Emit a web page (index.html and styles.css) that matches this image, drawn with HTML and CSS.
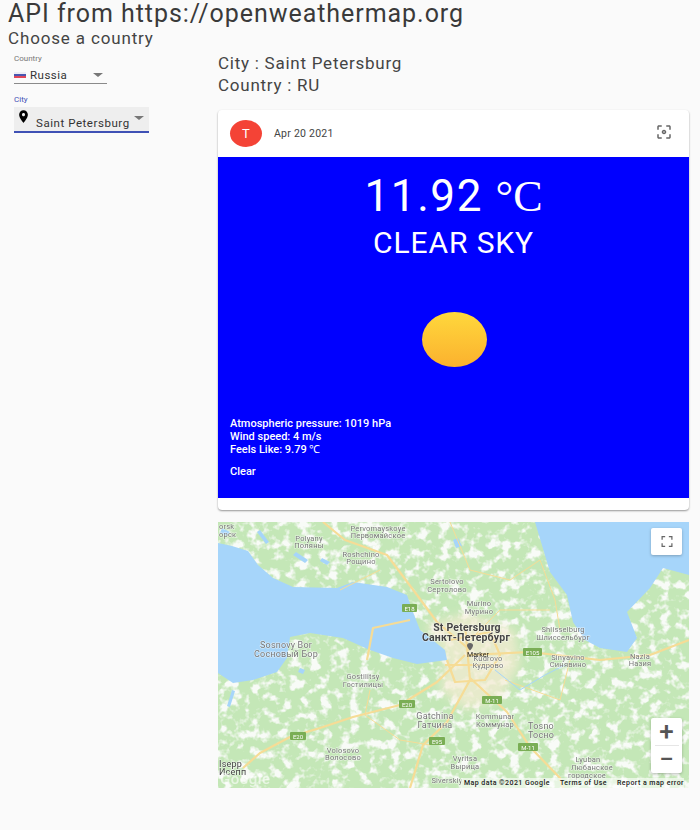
FILE: index.html
```html
<!DOCTYPE html>
<html lang="en">
<head>
    <meta charset="UTF-8">
    <title>Weather</title>
    <link rel="stylesheet" href="styles.css">
</head>
<body>
    <h1 class="title">API from https://openweathermap.org</h1>
    <h2 class="subtitle">Choose a country</h2>
    <div class="layout">
        <aside class="sidebar">
            <div class="field">
                <label class="field-label">Country</label>
                <div class="select">
                    <span class="flag"></span>
                    <span class="select-value">Russia</span>
                    <span class="arrow"></span>
                </div>
            </div>
            <div class="field field-city">
                <label class="field-label field-label-active">City</label>
                <div class="select select-filled">
                    <svg class="pin" viewBox="0 0 24 24"><path d="M12 2C8.13 2 5 5.13 5 9c0 5.25 7 13 7 13s7-7.75 7-13c0-3.87-3.13-7-7-7zm0 9.5c-1.38 0-2.5-1.12-2.5-2.5s1.12-2.5 2.5-2.5 2.5 1.12 2.5 2.5-1.12 2.5-2.5 2.5z"/></svg>
                    <span class="select-value">Saint Petersburg</span>
                    <span class="arrow"></span>
                </div>
            </div>
        </aside>
        <main class="content">
            <p class="place">City : Saint Petersburg</p>
            <p class="place">Country : RU</p>
            <div class="card">
                <div class="card-header">
                    <span class="avatar">T</span>
                    <span class="date">Apr 20 2021</span>
                    <svg class="focus-icon" viewBox="0 0 24 24"><path d="M5 15H3v4c0 1.1.9 2 2 2h4v-2H5v-4zM5 5h4V3H5c-1.1 0-2 .9-2 2v4h2V5zm14-2h-4v2h4v4h2V5c0-1.1-.9-2-2-2zm0 16h-4v2h4c1.1 0 2-.9 2-2v-4h-2v4zM12 9c-1.66 0-3 1.34-3 3s1.34 3 3 3 3-1.34 3-3-1.34-3-3-3zm0 4c-.55 0-1-.45-1-1s.45-1 1-1 1 .45 1 1-.45 1-1 1z"/></svg>
                </div>
                <div class="weather">
                    <div class="temp">11.92 <span class="temp-unit">°C</span></div>
                    <div class="sky">CLEAR SKY</div>
                    <div class="sun"></div>
                    <div class="facts">
                        <p>Atmospheric pressure: 1019 hPa</p>
                        <p>Wind speed: 4 m/s</p>
                        <p>Feels Like: 9.79 ℃</p>
                        <p class="facts-main">Clear</p>
                    </div>
                </div>
            </div>
            <div class="map">
                <svg class="map-art" viewBox="218 522 472 267">
                    <defs>
                        <filter id="patches" x="0" y="0" width="100%" height="100%">
                            <feTurbulence type="fractalNoise" baseFrequency="0.1" numOctaves="3" seed="11"/>
                            <feColorMatrix values="0 0 0 0 0.94  0 0 0 0 0.96  0 0 0 0 0.93  5 0 0 0 -2.45"/>
                            <feGaussianBlur stdDeviation="0.7"/>
                        </filter>
                        <filter id="soft"><feGaussianBlur stdDeviation="0.5"/></filter>
                        <filter id="fade"><feGaussianBlur stdDeviation="5"/></filter>
                    </defs>
                    <rect x="218" y="522" width="472" height="267" fill="#c4e7b7"/>
                    <rect x="218" y="522" width="472" height="267" filter="url(#patches)"/>
                    <path class="city-area" filter="url(#fade)" d="M425 625 L470 612 L515 630 L520 665 L500 700 L465 710 L440 690 L445 655 Z"/>
                    <g filter="url(#soft)">
                        <g class="water">
                            <path d="M218 543 L232 546 L248 551 L258 565 L273 578 L293 587 L337 588 L353 582 L387 587 L407 595 L413 612 L420 630 L445 650 L447 660 L417 664 L393 658 L370 650 L343 638 L310 633 L290 637 L287 658 L277 672 L253 680 L233 683 L218 673 Z"/>
                            <path d="M535 522 L550 572 L567 595 L573 622 L585 640 L600 648 L627 652 L637 638 L627 612 L650 588 L663 568 L689 575 L689 522 Z"/>
                            <path d="M260 530 l9 12 -3 2 -9 -12 Z M296 552 l12 8 -3 3 -12 -8 Z M322 558 l8 4 -3 3 -7 -4 Z M458 538 l4 8 -6 2 -3 -8 Z M222 528 l8 4 -3 4 -7 -3 Z"/>
                            <path d="M300 668 l5 2 -2 4 -5 -2 Z M232 690 l3 1 -5 16 -3 -1 Z"/>
                        </g>
                        <g class="roads">
                            <path d="M243 768 L260 753 L290 737 L320 728 L353 717 L400 705 L437 682 L465 655"/>
                            <path d="M323 522 L345 540 L387 555 L417 595 L437 622 L470 650"/>
                            <path d="M367 660 L373 628 L410 620"/>
                            <path d="M470 678 L507 712 L530 747 L560 778 L563 788"/>
                            <path d="M470 655 L530 652 L600 660 L650 655 L689 640"/>
                            <path d="M410 788 L423 745 L447 722 L470 680"/>
                            <path d="M450 640 L490 632 L500 655 L485 680 L455 682 L447 660 M465 625 L470 680 M445 665 L500 665"/>
                            <path class="road-thin" d="M450 522 L470 570 L510 580 L540 560 L555 600 L560 630 M470 640 L500 610 L550 610 M505 680 L560 700 L570 660 M370 690 L365 715 L400 740 L430 745 M340 590 L380 570"/>
                            <path class="road-blue" d="M495 670 L520 690 L545 675 L565 665"/>
                        </g>
                        <g class="shields">
                            <rect x="402" y="604" width="15" height="8"/>
                            <rect x="523" y="648" width="19" height="8"/>
                            <rect x="399" y="700" width="16" height="8"/>
                            <rect x="290" y="732" width="16" height="8"/>
                            <rect x="429" y="737" width="16" height="8"/>
                            <rect x="482" y="696" width="20" height="8"/>
                            <rect x="518" y="743" width="20" height="8"/>
                        </g>
                        <g class="shield-text">
                            <text x="409.500" y="610.500">E18</text>
                            <text x="532.500" y="654.500">E105</text>
                            <text x="407" y="706.500">E20</text>
                            <text x="298" y="738.500">E20</text>
                            <text x="437" y="743.500">E95</text>
                            <text x="492" y="702.500">M-11</text>
                            <text x="528" y="749.500">M-11</text>
                        </g>
                        <g class="labels">
                            <text x="219" y="529" class="label-start">orsk</text><text x="219" y="537" class="label-start">орск</text>
                            <text x="309" y="541">Polyany</text><text x="309" y="548">Поляны</text>
                            <text x="378" y="531">Pervomayskoye</text><text x="378" y="538">Первомайское</text>
                            <text x="361" y="557">Roshchino</text><text x="361" y="564">Рощино</text>
                            <text x="447" y="584">Sertolovo</text><text x="447" y="592">Сертолово</text>
                            <text x="479" y="606">Murino</text><text x="479" y="614">Мурино</text>
                            <text x="563" y="632">Shlisselburg</text><text x="563" y="640">Шлиссельбург</text>
                            <text x="488" y="661">Kudrovo</text><text x="488" y="668">Кудрово</text>
                            <text x="568" y="660">Sinyavino</text><text x="568" y="667">Синявино</text>
                            <text x="640" y="659">Nazia</text><text x="640" y="666">Назия</text>
                            <text x="363" y="679">Gostilitsy</text><text x="363" y="687">Гостилицы</text>
                            <text x="495" y="719">Kommunar</text><text x="495" y="727">Коммунар</text>
                            <text x="343" y="753">Volosovo</text><text x="343" y="760">Волосово</text>
                            <text x="465" y="761">Vyritsa</text><text x="465" y="769">Вырица</text>
                            <text x="588" y="762">Lyuban</text><text x="592" y="770">Любанское</text><text x="587" y="778">городское</text>
                            <text x="447" y="783">Siverskiy</text>
                        </g>
                        <g class="labels labels-big">
                            <text x="286" y="648">Sosnovy Bor</text><text x="286" y="657">Сосновый Бор</text>
                            <text x="435" y="719">Gatchina</text><text x="435" y="728">Гатчина</text>
                            <text x="541" y="729">Tosno</text><text x="541" y="738">Тосно</text>
                            <text x="219" y="767" class="label-dark label-start">Isepp</text><text x="219" y="775" class="label-dark label-start">Исепп</text>
                        </g>
                        <g class="labels labels-city">
                            <text x="467" y="631">St Petersburg</text>
                            <text x="466" y="641">Санкт-Петербург</text>
                        </g>
                        <path class="marker-pin" d="M470 643 c-2 0 -3 1.200 -3 2.600 c0 2 3 4.900 3 4.900 s3 -2.900 3 -4.900 c0 -1.400 -1 -2.600 -3 -2.600 Z"/>
                        <text x="478" y="657" class="marker-label">Marker</text>
                        <text x="220" y="784" class="google-mark">Google</text>
                    </g>
                </svg>
                <button class="map-button map-fullscreen">
                    <svg viewBox="0 0 18 18"><path d="M1 6V1h5M12 1h5v5M17 12v5h-5M6 17H1v-5"/></svg>
                </button>
                <div class="map-button map-zoom">
                    <span class="zoom-sign">+</span>
                    <span class="zoom-line"></span>
                    <span class="zoom-sign">−</span>
                </div>
                <div class="map-credits">
                    <span>Map data ©2021 Google</span>
                    <span>Terms of Use</span>
                    <span>Report a map error</span>
                </div>
            </div>
        </main>
    </div>
</body>
</html>
```

FILE: styles.css
```css
/* General reset */
* {
    margin: 0;
    padding: 0;
    box-sizing: border-box;
}

body {
    font-family: Roboto, sans-serif;
    background: #fafafa;
    color: rgba(0, 0, 0, 0.87);
    height: 830px;
    overflow: hidden;
}

.title {
    font-size: 25px;
    line-height: 28px;
    font-weight: 400;
    letter-spacing: 0.95px;
    padding-left: 8px;
    color: #3a3a3a;
}

.subtitle {
    font-size: 17px;
    line-height: 20px;
    font-weight: 400;
    letter-spacing: 0.85px;
    padding-left: 8px;
    color: #444;
}

.layout {
    display: flex;
}

/* Left column with the two selects */
.sidebar {
    width: 218px;
    padding: 6px 0 0 14px;
}

.field-label {
    display: block;
    font-size: 8px;
    line-height: 10px;
    color: #777;
}

.field-label-active {
    color: #3f51b5;
}

.select {
    display: flex;
    align-items: center;
    width: 93px;
    height: 18px;
    margin-top: 2px;
    font-size: 11.500px;
    letter-spacing: 0.5px;
    color: #333;
    border-bottom: 1px solid #8a8a8a;
}

.field-city {
    margin-top: 11px;
}

.select-filled {
    position: relative;
    width: 135px;
    height: 26px;
    font-size: 11.500px;
    letter-spacing: 0.55px;
    background: #eeeeee;
    border-bottom: 2px solid #3f51b5;
}

.flag {
    width: 12px;
    height: 6px;
    margin-right: 4px;
    background: linear-gradient(#ececf4 0 33%, #4a56b0 33% 66%, #e0475a 66%);
}

.arrow {
    margin-left: auto;
    margin-right: 4px;
    border-left: 5px solid transparent;
    border-right: 5px solid transparent;
    border-top: 4px solid #777;
}

.pin {
    width: 15px;
    height: 15px;
    margin: -5px 5px 0 2px;
}

.select-filled .select-value {
    margin-top: 8px;
}

.select-filled .arrow {
    margin-right: 5px;
    margin-top: -3px;
}

/* Right column */
.content {
    width: 471px;
    padding-top: 4px;
}

.place {
    font-size: 17px;
    line-height: 22px;
    font-weight: 400;
    letter-spacing: 0.75px;
    color: #444;
}

.card {
    margin-top: 14px;
    height: 400px;
    background: #fff;
    border-radius: 4px;
    overflow: hidden;
    box-shadow: 0 1px 2px rgba(0, 0, 0, 0.4);
}

.card-header {
    display: flex;
    align-items: center;
    height: 47px;
    padding: 0 16px 0 12px;
}

.avatar {
    display: flex;
    align-items: center;
    justify-content: center;
    width: 32px;
    height: 27px;
    border-radius: 50%;
    background: #f44336;
    color: #fff;
    font-size: 13px;
}

.date {
    margin-left: 12px;
    font-size: 10.500px;
    letter-spacing: 0.25px;
    color: #444;
}

.focus-icon {
    width: 18px;
    height: 18px;
    margin-left: auto;
    margin-top: -3px;
    fill: #666;
}

.weather {
    display: flex;
    flex-direction: column;
    align-items: center;
    height: 341px;
    background: #0000ff;
    color: #fff;
}

.temp {
    margin-top: 14px;
    font-size: 44px;
    line-height: 50px;
    font-weight: 400;
    letter-spacing: 1.6px;
    white-space: pre;
}

.temp-unit {
    font-family: "Liberation Serif", serif;
    letter-spacing: 0;
}

.sky {
    margin-top: 3px;
    font-size: 30px;
    line-height: 36px;
    letter-spacing: 0.9px;
}

.sun {
    width: 65px;
    height: 55px;
    margin: 51px 0 0 1px;
    border-radius: 50%;
    background: linear-gradient(#ffd83c, #fbb12e);
}

.facts {
    align-self: flex-start;
    margin: 50px 0 0 12px;
    font-size: 11px;
    line-height: 13px;
    font-weight: 500;
}

.facts-main {
    margin-top: 9px;
}

/* Map with the controls lying over it */
.map {
    position: relative;
    margin-top: 12px;
    height: 266px;
    overflow: hidden;
}

.map-art {
    display: block;
    width: 472px;
    height: 267px;
}

.city-area {
    fill: #f3ecd2;
    opacity: 0.75;
}

.water path {
    fill: #a6d5fa;
}

.roads path {
    fill: none;
    stroke: #f6dc96;
    stroke-width: 2.200;
    stroke-linejoin: round;
}

.roads .road-thin {
    stroke-width: 1;
}

.roads .road-blue {
    stroke: #a6d5fa;
    stroke-width: 1;
}

.shields rect {
    fill: #7aae55;
    rx: 1px;
}

.shield-text text {
    font-size: 6px;
    fill: #fff;
    text-anchor: middle;
}

.labels text {
    font-size: 7.500px;
    letter-spacing: 0.2px;
    fill: #777;
    stroke: rgba(255, 255, 255, 0.6);
    stroke-width: 1.200px;
    paint-order: stroke;
    text-anchor: middle;
}

.labels .label-start {
    text-anchor: start;
}

.labels-big text {
    font-size: 9px;
}

.labels-big .label-dark {
    fill: #444;
}

.labels-city text {
    font-size: 10.500px;
    font-weight: 700;
    fill: #444;
}

.marker-pin {
    fill: #666;
}

.marker-label {
    font-size: 7px;
    fill: #222;
    text-anchor: middle;
}

.google-mark {
    font-size: 15px;
    font-weight: 500;
    letter-spacing: 0.5px;
    fill: rgba(255, 255, 255, 0.6);
}

.map-button {
    position: absolute;
    right: 7px;
    width: 31px;
    background: #fff;
    border: none;
    border-radius: 2px;
    box-shadow: 0 1px 3px rgba(0, 0, 0, 0.25);
}

.map-fullscreen {
    top: 6px;
    height: 27px;
    display: flex;
    align-items: center;
    justify-content: center;
}

.map-fullscreen svg {
    width: 14px;
    height: 11px;
    fill: none;
    stroke: #666;
    stroke-width: 2;
}

.map-zoom {
    top: 196px;
    height: 55px;
    display: flex;
    flex-direction: column;
    align-items: center;
}

.zoom-sign {
    height: 27px;
    font-size: 26px;
    line-height: 27px;
    font-weight: 500;
    color: #555;
}

.zoom-line {
    width: 24px;
    height: 1px;
    background: #e6e6e6;
}

.map-credits {
    position: absolute;
    right: 5px;
    bottom: 0;
    display: flex;
    gap: 10px;
    padding-left: 3px;
    height: 10px;
    font-size: 7px;
    line-height: 10px;
    font-weight: 500;
    letter-spacing: 0.45px;
    color: #222;
    background: rgba(255, 255, 255, 0.6);
}
```
